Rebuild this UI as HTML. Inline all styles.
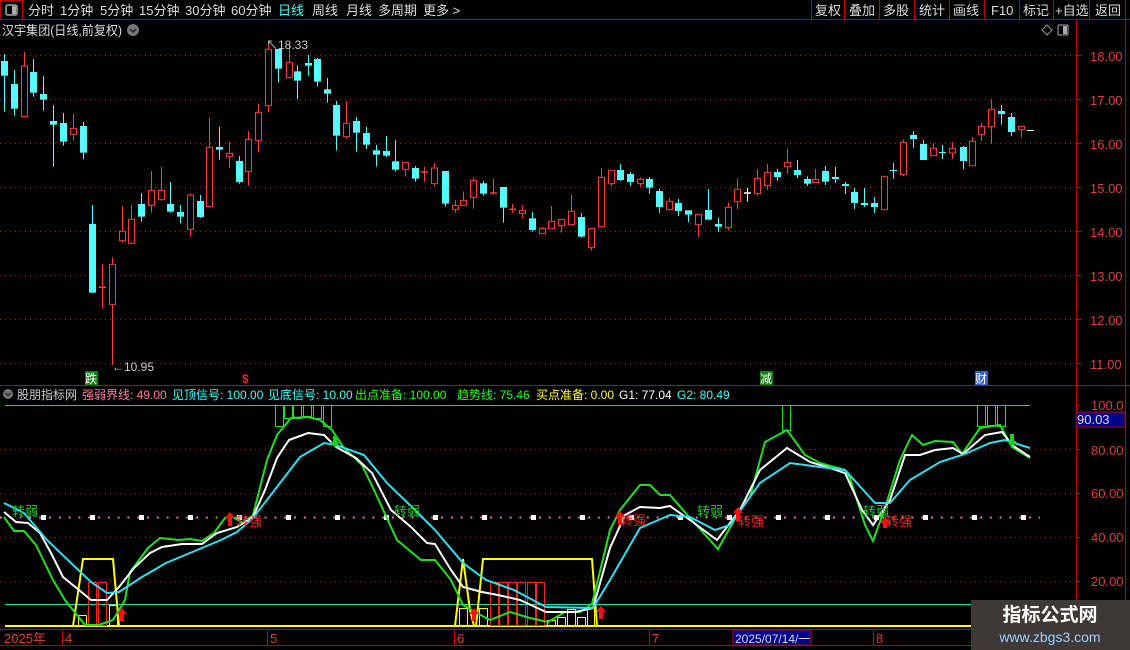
<!DOCTYPE html>
<html><head><meta charset="utf-8">
<style>
*{margin:0;padding:0;box-sizing:border-box}
body{width:1130px;height:650px;background:#000;overflow:hidden;position:relative;font-family:"Liberation Sans","Noto Sans CJK SC",sans-serif;color:#ccc}
svg{position:absolute;left:0;top:0}
</style></head><body>
<svg id="s" width="1130" height="650" xmlns="http://www.w3.org/2000/svg" font-family="Liberation Sans, Noto Sans CJK SC, sans-serif">
<rect x="0.5" y="0.5" width="22" height="19" fill="none" stroke="#c00000"/>
<rect x="6" y="5" width="11" height="10" rx="2" fill="none" stroke="#aaa" stroke-width="1.5"/><rect x="12" y="6" width="4" height="8" fill="#aaa"/>
<line x1="0" y1="19.5" x2="1130" y2="19.5" stroke="#c00000"/>
<g stroke="#c00000"><line x1="811.5" y1="0" x2="811.5" y2="19"/><line x1="844.5" y1="0" x2="844.5" y2="19"/><line x1="879.5" y1="0" x2="879.5" y2="19"/><line x1="914.5" y1="0" x2="914.5" y2="19"/><line x1="949.5" y1="0" x2="949.5" y2="19"/><line x1="984.5" y1="0" x2="984.5" y2="19"/><line x1="1019.5" y1="0" x2="1019.5" y2="19"/><line x1="1053.5" y1="0" x2="1053.5" y2="19"/><line x1="1089.5" y1="0" x2="1089.5" y2="19"/><line x1="1125.5" y1="0" x2="1125.5" y2="650"/></g>
<g font-size="13" fill="#ddd">
<text x="28" y="15">分时</text><text x="60" y="15">1分钟</text><text x="100" y="15">5分钟</text><text x="139" y="15">15分钟</text><text x="185" y="15">30分钟</text><text x="231" y="15">60分钟</text><text x="278" y="15" fill="#40ffff">日线</text><text x="312" y="15">周线</text><text x="346" y="15">月线</text><text x="378" y="15">多周期</text><text x="423" y="15">更多 &gt;</text>
<text x="815" y="15">复权</text><text x="849" y="15">叠加</text><text x="883" y="15">多股</text><text x="919" y="15">统计</text><text x="953" y="15">画线</text><text x="991" y="15">F10</text><text x="1023" y="15">标记</text><text x="1055" y="15">+自选</text><text x="1095" y="15">返回</text>
<text x="2" y="35" textLength="120" lengthAdjust="spacingAndGlyphs">汉宇集团(日线,前复权)</text></g>
<circle cx="133" cy="30" r="6" fill="#777"/><path d="M130 29 L133 32 L136 29" stroke="#222" stroke-width="1.5" fill="none"/>
<path d="M1047 25 L1052 30 L1047 35 L1042 30Z" fill="none" stroke="#999"/>
<rect x="1058" y="25" width="10" height="10" rx="1" fill="none" stroke="#aaa"/><rect x="1063" y="26" width="4" height="8" fill="#aaa"/>
<line x1="1076.5" y1="20" x2="1076.5" y2="650" stroke="#c00000"/>
<g stroke="#b02020" stroke-dasharray="1 4">
<line x1="0" y1="55.5" x2="1076" y2="55.5"/><line x1="0" y1="99.5" x2="1076" y2="99.5"/><line x1="0" y1="143.5" x2="1076" y2="143.5"/><line x1="0" y1="187.5" x2="1076" y2="187.5"/><line x1="0" y1="231.5" x2="1076" y2="231.5"/><line x1="0" y1="275.5" x2="1076" y2="275.5"/><line x1="0" y1="319.5" x2="1076" y2="319.5"/><line x1="0" y1="363.5" x2="1076" y2="363.5"/></g>
<g stroke="#c00000"><line x1="1076" y1="55.5" x2="1082" y2="55.5"/><line x1="1076" y1="99.5" x2="1082" y2="99.5"/><line x1="1076" y1="143.5" x2="1082" y2="143.5"/><line x1="1076" y1="187.5" x2="1082" y2="187.5"/><line x1="1076" y1="231.5" x2="1082" y2="231.5"/><line x1="1076" y1="275.5" x2="1082" y2="275.5"/><line x1="1076" y1="319.5" x2="1082" y2="319.5"/><line x1="1076" y1="363.5" x2="1082" y2="363.5"/></g>
<g font-size="13" fill="#e03c3c"><text x="1090" y="61">18.00</text><text x="1090" y="105">17.00</text><text x="1090" y="149">16.00</text><text x="1090" y="193">15.00</text><text x="1090" y="237">14.00</text><text x="1090" y="281">13.00</text><text x="1090" y="325">12.00</text><text x="1090" y="369">11.00</text></g>
<g id="candles"></g>
<text x="266" y="49" font-size="12" fill="#ccc">↖18.33</text>
<text x="112" y="371" font-size="12" fill="#ccc">←10.95</text>
<rect x="85" y="371" width="13" height="14" fill="#108010"/><text x="85" y="383" font-size="12" fill="#fff">跌</text>
<text x="242" y="383" font-size="12" fill="#ff2020" font-weight="bold">$</text>
<rect x="760" y="371" width="13" height="14" fill="#108010"/><text x="760" y="383" font-size="12" fill="#fff">减</text>
<rect x="975" y="371" width="13" height="14" fill="#3060c0"/><text x="975" y="383" font-size="12" fill="#fff">财</text>
<line x1="0" y1="385.5" x2="1130" y2="385.5" stroke="#c00000"/>
<circle cx="8" cy="394" r="5" fill="#777"/><path d="M5.5 393 L8 395.5 L10.5 393" stroke="#222" stroke-width="1.3" fill="none"/>
<g font-size="12"><text x="17" y="399" fill="#ccc">股朋指标网</text><text x="82" y="399" fill="#ff80a0">强弱界线: 49.00</text><text x="172" y="399" fill="#40ffff">见顶信号: 100.00</text><text x="268" y="399" fill="#40ffff">见底信号: 10.00</text><text x="355" y="399" fill="#20ff20">出点准备: 100.00</text><text x="457" y="399" fill="#20ff20">趋势线: 75.46</text><text x="536" y="399" fill="#ffff20">买点准备: 0.00</text><text x="619" y="399" fill="#fff">G1: 77.04</text><text x="677" y="399" fill="#40ffff">G2: 80.49</text></g>
<line x1="5" y1="405.5" x2="1030" y2="405.5" stroke="#20e020"/>
<g stroke="#b02020" stroke-dasharray="1 4"><line x1="0" y1="449.5" x2="1076" y2="449.5"/><line x1="0" y1="493.5" x2="1076" y2="493.5"/><line x1="0" y1="537.5" x2="1076" y2="537.5"/><line x1="0" y1="581.5" x2="1076" y2="581.5"/></g>
<line x1="0" y1="517.5" x2="1040" y2="517.5" stroke="#e070b0" stroke-width="2" stroke-dasharray="2 7.8"/>
<g id="sq" fill="#fff"></g>
<line x1="5" y1="604.5" x2="1076" y2="604.5" stroke="#20e0c0"/>
<line x1="5" y1="626" x2="1076" y2="626" stroke="#ffff00" stroke-width="2"/>
<g font-size="13" fill="#e03c3c"><text x="1091" y="410">100.0</text><text x="1091" y="455">80.00</text><text x="1091" y="498">60.00</text><text x="1091" y="542">40.00</text><text x="1091" y="586">20.00</text></g>
<g stroke="#c00000"><line x1="1076" y1="405" x2="1080" y2="405"/><line x1="1076" y1="449.5" x2="1080" y2="449.5"/><line x1="1076" y1="493.5" x2="1080" y2="493.5"/><line x1="1076" y1="537.5" x2="1080" y2="537.5"/><line x1="1076" y1="581.5" x2="1080" y2="581.5"/></g>
<rect x="1076" y="412" width="49" height="15" fill="#00008a" stroke="#c00000"/><text x="1077" y="424" font-size="13" fill="#ddd">90.03</text>
<polyline fill="none" stroke="#ffff00" stroke-width="2" points="73,626 83,559 113,559 119,626 455,626 463,559 470,610 474,626 476,626 483,559 592,559 597,626"/>
<g fill="none" stroke-width="1">
<g stroke="#ff2020"><rect x="88.5" y="582.5" width="8" height="43"/><rect x="98.5" y="582.5" width="8" height="43"/>
<rect x="490.5" y="582.5" width="8" height="43"/><rect x="499.5" y="582.5" width="8" height="43"/><rect x="508.5" y="582.5" width="8" height="43"/><rect x="517.5" y="582.5" width="8" height="43"/><rect x="527.5" y="582.5" width="8" height="43"/><rect x="536.5" y="582.5" width="8" height="43"/></g>
<g stroke="#ffff00"><rect x="78.5" y="615.5" width="8" height="10"/><rect x="109.5" y="605.5" width="8" height="20"/><rect x="459.5" y="608.5" width="8" height="17"/><rect x="479.5" y="608.5" width="8" height="17"/><rect x="547.5" y="620.5" width="8" height="5"/><rect x="557.5" y="617.5" width="8" height="8"/><rect x="567.5" y="609.5" width="8" height="16"/><rect x="577.5" y="617.5" width="8" height="8"/><rect x="587.5" y="607.5" width="7" height="18"/></g>
<g stroke="#20e020"><rect x="275.5" y="405.5" width="8" height="21"/><rect x="284.5" y="405.5" width="8" height="13"/><rect x="293.5" y="405.5" width="8" height="13"/><rect x="303.5" y="405.5" width="8" height="11"/><rect x="313.5" y="405.5" width="8" height="13"/><rect x="323.5" y="405.5" width="8" height="21"/><rect x="782.5" y="405.5" width="8" height="25"/><rect x="977.5" y="405.5" width="8" height="21"/><rect x="987.5" y="405.5" width="8" height="20"/><rect x="997.5" y="405.5" width="8" height="21"/></g></g>
<polyline fill="none" stroke="#20e020" stroke-width="2" points="4,517 14,531 24,531 36,545 53,580 65,600 77,615 85,625 99,625 113,620 125,600 130,572 148,548 160,538 178,540 190,539 202,541 214,533 225,518 231,516 243,523 253,515 267,460 277,435 291,418 308,417 320,420 332,430 344,448 362,465 374,490 397,540 409,550 421,560 435,560 451,580 463,605 475,612 490,620 510,612 530,618 548,622 565,612 580,612 592,604 610,530 620,510 640,485 650,485 660,495 670,495 690,518 718,549 740,510 750,497 765,442 787,430 805,455 820,463 845,470 850,478 865,525 873,541 885,508 900,460 912,435 923,445 935,441 953,442 962,454 980,428 1000,425 1012,447 1030,458"/>
<polyline fill="none" stroke="#fff" stroke-width="2" points="4,512 16,522 28,523 40,533 51,553 63,577 79,590 91,600 107,600 119,587 134,568 150,553 162,547 182,544 202,544 217,533 237,527 253,517 265,490 277,458 289,440 308,433 324,435 336,447 356,458 372,473 391,510 411,527 427,543 435,544 451,570 463,587 482,592 498,595 520,600 546,612 575,612 593,608 610,548 625,515 640,507 660,508 670,506 690,520 717,540 740,510 760,470 787,448 810,462 830,468 845,473 862,510 873,525 890,500 905,455 920,455 935,450 953,448 963,454 985,435 1002,432 1012,445 1030,457"/>
<polyline fill="none" stroke="#30e0f0" stroke-width="2" points="4,503 24,513 47,540 71,563 91,582 107,593 119,592 142,577 166,563 190,553 202,548 221,540 237,532 253,518 277,487 300,457 324,443 336,445 364,455 387,483 415,510 435,530 463,563 486,580 514,590 546,607 593,608 610,580 640,528 670,515 690,517 715,530 730,525 760,483 790,463 820,467 845,470 865,492 875,503 890,503 910,480 940,462 965,454 990,443 1005,440 1030,448"/>
<g fill="#ff1010">
<path d="M122 608 L127 614 L124 614 L124 621 L120 621 L120 614 L117 614Z"/><path d="M474 608 L479 614 L476 614 L476 621 L472 621 L472 614 L469 614Z"/><path d="M601 606 L606 612 L603 612 L603 619 L599 619 L599 612 L596 612Z"/>
<path d="M230 512 L235 518 L232 518 L232 526 L228 526 L228 518 L225 518Z"/><path d="M620 511 L625 517 L622 517 L622 525 L618 525 L618 517 L615 517Z"/><path d="M738 507 L743 513 L740 513 L740 521 L736 521 L736 513 L733 513Z"/><path d="M885 517 L890 523 L887 523 L887 528 L883 528 L883 523 L880 523Z"/></g>
<g fill="#20d020"><path d="M335 448 L340 442 L337 442 L337 436 L333 436 L333 442 L330 442Z"/><path d="M1012 447 L1017 441 L1014 441 L1014 434 L1010 434 L1010 441 L1007 441Z"/></g>
<g font-size="13" fill="#ff2020"><text x="236" y="526">转强</text><text x="620" y="525">转强</text><text x="738" y="526">转强</text><text x="886" y="526">转强</text></g>
<g font-size="13" fill="#20d020"><text x="12" y="516">转弱</text><text x="394" y="516">转弱</text><text x="697" y="516">转弱</text><text x="863" y="516">转弱</text></g>
<line x1="0" y1="629.5" x2="1076" y2="629.5" stroke="#c00000"/>
<line x1="0" y1="645.5" x2="1076" y2="645.5" stroke="#c00000"/>
<g stroke="#c00000"><line x1="62.5" y1="630" x2="62.5" y2="645"/><line x1="267.5" y1="630" x2="267.5" y2="645"/><line x1="454.5" y1="630" x2="454.5" y2="645"/><line x1="649.5" y1="630" x2="649.5" y2="645"/><line x1="873.5" y1="630" x2="873.5" y2="645"/></g>
<g font-size="13" fill="#e03c3c"><text x="4" y="643">2025年</text><text x="65" y="643">4</text><text x="270" y="643">5</text><text x="457" y="643">6</text><text x="652" y="643">7</text><text x="876" y="643">8</text></g>
<rect x="733" y="630" width="78" height="15" fill="#000090" stroke="#c00000"/><text x="735" y="643" font-size="12" fill="#ddd">2025/07/14/一</text>
<rect x="971" y="600" width="159" height="50" fill="#3e3836"/>
<text x="1050" y="621" font-size="19" font-weight="bold" fill="#fff" text-anchor="middle">指标公式网</text>
<text x="1050" y="642" font-size="14" fill="#9fd0ff" text-anchor="middle">www.zbgs3.com</text>
</svg>
<script>
var A=[[12,'c',93,137,72,245],[42,'c',162,236,120,257],[70,'r',108,260,66,260],[97,'c',126,188,87,200],[126,'c',192,209,138,242],[155,'c',273,284,225,410],[184,'c',279,335,249,347],[213,'r',295,313,252,332],[240,'c',288,368,276,388],[268,'c',582,788,525,788],[297,'r',772,778,702,835],[326,'r',703,823,682,1005],[353,'r',604,632,528,638],[381,'r',568,640,525,640],[410,'c',522,560,489,575],[439,'r',481,526,423,548],[468,'r',481,509,411,512],[495,'c',522,545,456,548],[524,'c',546,560,525,580],[553,'r',495,598,491,620],[581,'c',513,561,495,564],[608,'r',352,530,264,530],[637,'c',351,359,291,389],[666,'r',370,380,336,413],[695,'c',393,456,378,461],[721,'r',328,425,303,467],[750,'r',247,331,220,368],[779,'r',58,227,38,247],[808,'c',57,116,57,158],[838,'r',97,143,45,146],[863,'c',124,152,106,207],[893,'c',99,107,75,137],[921,'c',87,155,84,170],[951,'c',178,191,144,218],[977,'c',225,317,213,362],[1006,'r',280,320,213,326],[1035,'c',273,308,261,365],[1064,'c',309,344,291,357],[1093,'c',361,374,345,410],[1120,'c',363,377,318,381],[1148,'c',394,419,330,425],[1177,'r',397,418,397,440],[1206,'c',414,446,408,455],[1231,'r',426,430,410,455],[1261,'r',414,461,399,470],[1291,'c',423,521,423,530],[1320,'r',527,538,510,548],[1346,'r',511,526,484,526],[1375,'r',451,502,444,536],[1404,'c',460,491,453,497],[1433,'r',489,494,447,494],[1462,'c',471,533,471,578],[1488,'r',538,542,522,548],[1517,'r',541,550,525,566],[1545,'c',565,600,546,605]];
var B=[[36,'r',415,431,411,431],[62,'r',394,416,348,416],[91,'r',388,407,388,428],[120,'r',364,404,315,407],[149,'c',381,440,369,443],[178,'r',415,473,415,482],[205,'r',262,410,234,413],[234,'r',241,281,241,288],[262,'c',240,270,222,273],[291,'c',252,276,246,288],[318,'r',268,281,262,290],[347,'c',267,293,262,311],[376,'c',303,351,296,369],[405,'r',334,359,325,359],[431,'c',339,363,327,378],[460,'c',361,374,361,396],[489,'r',373,404,373,441],[518,'c',360,389,297,389],[547,'c',402,410,384,426],[574,'r',352,413,337,421],[602,'r',298,335,267,357],[630,'w',309,311,294,335],[660,'r',265,311,237,318],[687,'r',247,287,222,300],[716,'c',246,261,237,273],[745,'r',217,230,177,251],[774,'c',240,255,210,264],[803,'c',267,281,259,288],[829,'r',268,278,237,278],[858,'c',243,275,228,285],[887,'c',261,267,231,279],[916,'c',282,288,276,312],[942,'c',306,339,294,357],[971,'c',339,345,294,351],[1000,'c',339,351,321,369],[1029,'r',259,359,259,359],[1055,'c',240,243,219,267],[1084,'r',157,254,148,258],[1113,'c',135,147,123,174],[1142,'c',162,210,150,210],[1171,'r',175,197,160,197],[1197,'c',186,188,165,207],[1226,'r',175,189,156,207],[1256,'c',171,213,168,237],[1285,'r',154,227,141,227],[1311,'r',109,134,99,153],[1340,'r',58,110,28,161],[1369,'c',63,72,45,104],[1398,'c',81,126,69,138],[1427,'r',109,119,109,143]];
var g=document.getElementById('candles'),h='';
function d(x,c,bt,bb,wt,wb){var col=c=='r'?'#ff3b3b':(c=='w'?'#fff':'#54fcfc');x=Math.round(x)+0.5;
h+='<line x1="'+x+'" y1="'+wt+'" x2="'+x+'" y2="'+wb+'" stroke="'+col+'"/>';
var hh=Math.max(bb-bt,1);
if(c=='c')h+='<rect x="'+(x-3.5)+'" y="'+bt+'" width="7" height="'+hh+'" fill="'+col+'"/>';
else if(hh<2.5)h+='<line x1="'+(x-3.5)+'" y1="'+bt+'" x2="'+(x+3.5)+'" y2="'+bt+'" stroke="'+col+'" stroke-width="1.5"/>';
else h+='<rect x="'+(x-3)+'" y="'+bt+'" width="6" height="'+hh+'" fill="#000" stroke="'+col+'"/>';}
A.forEach(function(a){d(a[0]/2.904,a[1],30+a[2]/3,30+a[3]/3,30+a[4]/3,30+a[5]/3)});
B.forEach(function(a){d(530+a[0]/2.904,a[1],90+a[2]/3,90+a[3]/3,90+a[4]/3,90+a[5]/3)});
h+='<line x1="1027" y1="130.5" x2="1034" y2="130.5" stroke="#fff"/>';
g.innerHTML=h;
var s='';for(var x=43;x<1040;x+=49){s+='<rect x="'+(x-2)+'" y="515" width="5" height="5"/>';}
document.getElementById('sq').innerHTML=s;
</script>
</body></html>
